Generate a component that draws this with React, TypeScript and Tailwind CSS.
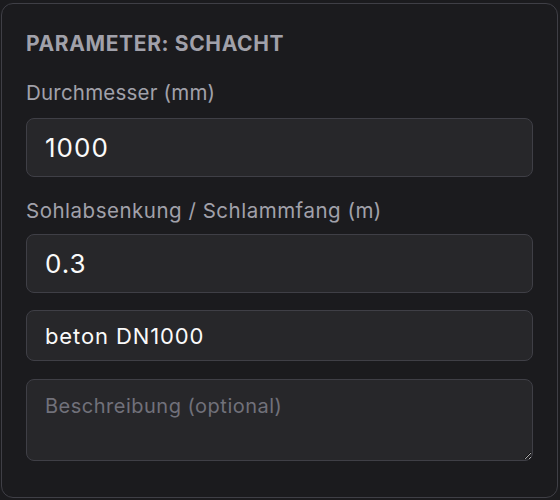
import React from "react";

export default function App() {
  return (
    <div className="w-[560px] h-[500px] bg-[#1b1b1e] overflow-hidden" style={{ fontFamily: "Inter, 'Noto Sans', sans-serif" }}>
      <div className="ml-[1px] mt-[3px] w-[557px] h-[495px] rounded-[12px] border border-[#3f3f46] bg-[#1b1b1e] px-[24px] pt-[26px]">
        <div className="text-[21px] leading-[28px] font-bold text-[#a1a1aa] tracking-[0.03em]">PARAMETER: SCHACHT</div>
        <div className="mt-[21px] text-[20.5px] leading-[28px] text-[#a1a1aa] tracking-[0.01em]">Durchmesser (mm)</div>
        <input
          defaultValue="1000"
          className="mt-[11px] block w-[507px] h-[59px] rounded-[8px] border border-[#3f3f46] bg-[#27272a] px-[18px] text-[26px] tracking-[0.04em] text-[#fafafa] outline-none"
        />
        <div className="mt-[20px] text-[20.5px] leading-[28px] text-[#a1a1aa] tracking-[0.025em]">Sohlabsenkung / Schlammfang (m)</div>
        <input
          defaultValue="0.3"
          className="mt-[9px] block w-[507px] h-[59px] rounded-[8px] border border-[#3f3f46] bg-[#27272a] px-[18px] text-[26px] tracking-[0.04em] text-[#fafafa] outline-none"
        />
        <input
          defaultValue="beton DN1000"
          className="mt-[17px] block w-[507px] h-[51px] rounded-[8px] border border-[#3f3f46] bg-[#27272a] px-[18px] text-[22px] tracking-[0.04em] text-[#fafafa] outline-none"
        />
        <textarea
          placeholder="Beschreibung (optional)"
          className="mt-[18px] block w-[507px] h-[82px] rounded-[8px] border border-[#3f3f46] bg-[#27272a] px-[18px] pt-[12px] text-[20px] leading-[28px] tracking-[0.025em] text-[#fafafa] placeholder:text-[#71717a] outline-none"
        />
      </div>
    </div>
  );
}
